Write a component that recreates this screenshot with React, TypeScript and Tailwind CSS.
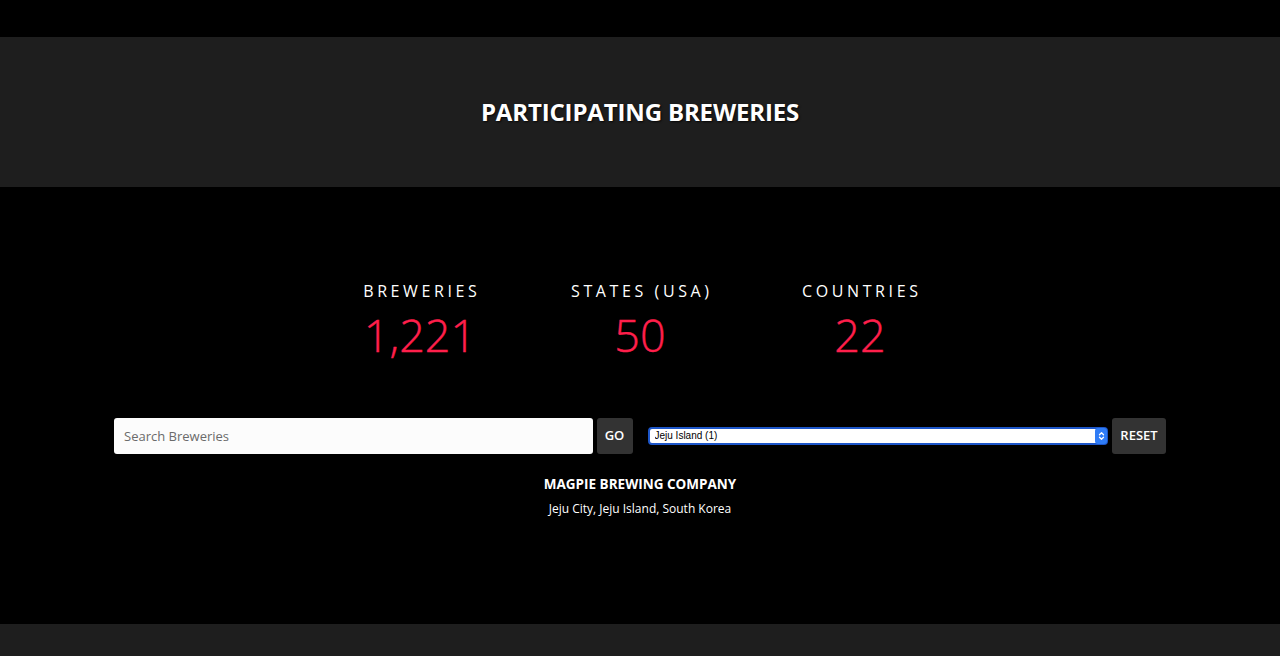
import {useState} from 'react'

const stats = [
  {label: 'Breweries', value: '1,221'},
  {label: 'States (USA)', value: '50'},
  {label: 'Countries', value: '22'},
]

export default function App() {
  const [query, setQuery] = useState('')
  const [region, setRegion] = useState('jeju')

  return (
    <div className="min-h-screen bg-black text-white" style={{fontFamily: '"Open Sans", "Liberation Sans", sans-serif'}}>
      <div className="h-[37px]"></div>
      <header className="h-[150px] bg-[#1e1e1e] flex items-center justify-center">
        <h1 className="text-[24px] tracking-[-0.15px] font-bold uppercase [text-shadow:1px_1px_2px_rgba(0,0,0,0.8)]">
          Participating Breweries
        </h1>
      </header>

      <main className="min-h-[437px] pt-[92px]">
        {/* Stats */}
        <div className="flex justify-center">
          {stats.map(s => (
            <div key={s.label} className="w-[220px] flex flex-col items-center">
              <div className="text-[16px] leading-[24px] uppercase tracking-[3.6px] pl-[3.6px]">{s.label}</div>
              <div className="mt-[7px] text-[45px] leading-[50px] font-light text-[#ff1f4b] [-webkit-text-stroke:0.4px_#ff1f4b]">{s.value}</div>
            </div>
          ))}
        </div>

        {/* Search + filter */}
        <div className="w-[1052px] mx-auto mt-[58px] grid grid-cols-2 gap-[15px]">
          <div className="flex gap-[4px]">
            <input
              value={query}
              onChange={e => setQuery(e.target.value)}
              placeholder="Search Breweries"
              className="flex-1 h-[36px] rounded-[3px] bg-[#fcfcfc] px-[10px] text-[13px] text-[#333] placeholder:text-[#6b6b6b] outline-none"
            />
            <button className="w-[36px] h-[36px] rounded-[3px] bg-[#333333] text-[13px] font-semibold">GO</button>
          </div>
          <div className="flex items-center gap-[4px]">
            <div className="relative flex-1 h-[18px] rounded-[4px] border-2 border-[#1d56c9] bg-white">
              <select
                value={region}
                onChange={e => setRegion(e.target.value)}
                className="appearance-none block w-full h-[14px] bg-transparent p-0 pl-[5px] text-[10px] leading-[14px] text-black outline-none"
                style={{fontFamily: '"Liberation Sans", Arial, sans-serif'}}
              >
                <option value="jeju">Jeju Island (1)</option>
              </select>
              <div className="absolute right-[-1px] top-[-1px] bottom-[-1px] w-[12px] rounded-[3px] bg-[#2f7cf6] flex items-center justify-center pointer-events-none">
                <svg width="7" height="10" viewBox="0 0 7 10" fill="none" stroke="white" strokeWidth="1.3" strokeLinecap="round" strokeLinejoin="round">
                  <path d="M1.5 3.8 3.5 1.8 5.5 3.8"/>
                  <path d="M1.5 6.2 3.5 8.2 5.5 6.2"/>
                </svg>
              </div>
            </div>
            <button className="w-[54px] h-[36px] rounded-[3px] bg-[#333333] text-[13px] font-semibold">RESET</button>
          </div>
        </div>

        {/* Result */}
        <div className="mt-[20px] text-center">
          <div className="text-[13.5px] leading-[20px] font-bold uppercase">Magpie Brewing Company</div>
          <div className="mt-[5px] text-[12px] leading-[20px]">Jeju City, Jeju Island, South Korea</div>
        </div>
      </main>

      <footer className="h-[32px] bg-[#1e1e1e]"></footer>
    </div>
  )
}
